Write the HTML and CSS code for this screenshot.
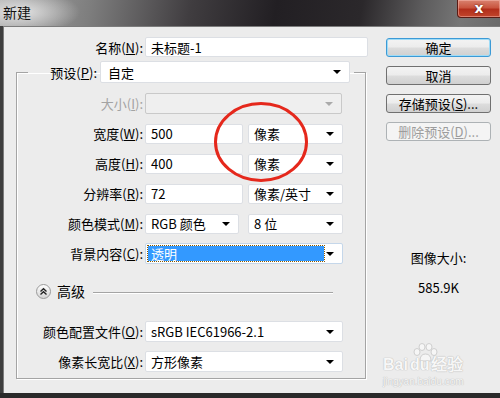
FILE: index.html
```html
<!DOCTYPE html>
<html lang="zh-CN">
<head>
  <meta charset="UTF-8" />
  <title>新建</title>
  <link rel="stylesheet" href="styles.css">
</head>
<body>
  <div class="window">
    <div class="titlebar">
      <span class="title">新建</span>
      <div class="close-btn">x</div>
    </div>

    <div class="client">
      <div class="form">
        <div class="row name-row">
          <label class="lbl">名称(<u>N</u>):</label>
          <div class="field input name-input">未标题-1</div>
        </div>

        <fieldset class="group">
          <legend class="preset">
            <label class="lbl preset-lbl">预设(<u>P</u>):</label>
            <div class="field select preset-select">自定<span class="arrow"></span></div>
          </legend>

          <div class="row first">
            <label class="lbl disabled">大小(<u>I</u>):</label>
            <div class="field select full off"><span class="arrow"></span></div>
          </div>
          <div class="row">
            <label class="lbl">宽度(<u>W</u>):</label>
            <div class="field input num">500</div>
            <div class="field select unit">像素<span class="arrow"></span></div>
          </div>
          <div class="row">
            <label class="lbl">高度(<u>H</u>):</label>
            <div class="field input num">400</div>
            <div class="field select unit">像素<span class="arrow"></span></div>
          </div>
          <div class="row">
            <label class="lbl">分辨率(<u>R</u>):</label>
            <div class="field input num">72</div>
            <div class="field select unit">像素/英寸<span class="arrow"></span></div>
          </div>
          <div class="row">
            <label class="lbl">颜色模式(<u>M</u>):</label>
            <div class="field select mode">RGB 颜色<span class="arrow"></span></div>
            <div class="field select unit">8 位<span class="arrow"></span></div>
          </div>
          <div class="row">
            <label class="lbl">背景内容(<u>C</u>):</label>
            <div class="field select full focused"><span class="sel-text">透明</span><span class="arrow"></span></div>
          </div>

          <div class="advanced">
            <svg class="adv-icon" width="15" height="15" viewBox="0 0 15 15">
              <defs>
                <linearGradient id="advg" x1="0" y1="0" x2="0" y2="1">
                  <stop offset="0" stop-color="#ffffff"/>
                  <stop offset="1" stop-color="#d4d4d4"/>
                </linearGradient>
              </defs>
              <circle cx="7.5" cy="7.5" r="7" fill="url(#advg)" stroke="#9a9a9a"/>
              <path d="M4.5 7.5 L7.5 4.8 L10.5 7.5 M4.5 10.5 L7.5 7.8 L10.5 10.5" fill="none" stroke="#222" stroke-width="1.4"/>
            </svg>
            <span class="adv-text">高级</span>
            <span class="adv-line"></span>
          </div>

          <div class="row profile">
            <label class="lbl">颜色配置文件(<u>O</u>):</label>
            <div class="field select full">sRGB IEC61966-2.1<span class="arrow"></span></div>
          </div>
          <div class="row">
            <label class="lbl">像素长宽比(<u>X</u>):</label>
            <div class="field select full">方形像素<span class="arrow"></span></div>
          </div>
        </fieldset>
      </div>

      <div class="side">
        <div class="btn default">确定</div>
        <div class="btn">取消</div>
        <div class="btn">存储预设(<u>S</u>)...</div>
        <div class="btn disabled">删除预设(<u>D</u>)...</div>
        <div class="image-size">
          <div>图像大小:</div>
          <div class="size-value">585.9K</div>
        </div>
      </div>
    </div>

    <svg class="mark" width="100" height="86" viewBox="0 0 100 86">
      <ellipse cx="50" cy="42" rx="45.5" ry="38.5" fill="none" stroke="#e5281c" stroke-width="3"/>
    </svg>

    <div class="watermark">
      <svg class="paw" width="30" height="20" viewBox="0 0 30 20">
        <g fill="#f6f6f6" stroke="#cfcfcf" stroke-width="1">
          <ellipse cx="6" cy="9" rx="3" ry="3.5"/>
          <ellipse cx="11" cy="4" rx="3" ry="3.5"/>
          <ellipse cx="18" cy="4" rx="3" ry="3.5"/>
          <ellipse cx="23" cy="9" rx="3" ry="3.5"/>
          <path d="M9 18 Q9 11 14.5 11 Q20 11 20 18 Z"/>
        </g>
      </svg>
      <div class="wm-line"><span>Bai</span><span class="du">du</span><span>经验</span></div>
      <div class="wm-url">jingyan.baidu.com</div>
    </div>
  </div>
</body>
</html>
```

FILE: styles.css
```css
* {
  box-sizing: border-box;
}
body {
  margin: 0;
  background: #2d2d2d;
  font-family: "Noto Sans CJK SC", "Microsoft YaHei", sans-serif;
  font-size: 13px;
  color: #000;
}
.window {
  width: 500px;
  height: 398px;
  position: relative;
  overflow: hidden;
  background: #3e3e3e;
  border-bottom: 5px solid #2a2a2a;
}
.titlebar {
  height: 26px;
  display: flex;
  align-items: flex-start;
  background:
    radial-gradient(ellipse 60px 22px at 20px 12px, rgba(235,235,235,0.9), rgba(235,235,235,0) 100%),
    linear-gradient(100deg, #a9a9a9 0%, #7e7e7e 18%, #403d40 38%, #221f23 55%, #2b282b 72%, #5d5c5d 84%, #777 92%, #6a6a6a 100%);
}
.title {
  padding-left: 3px;
  line-height: 25px;
  font-size: 14px;
  color: #111;
}
.close-btn {
  margin-left: auto;
  margin-right: -1px;
  width: 44px;
  height: 18px;
  border: 1px solid #5a1b14;
  border-top: none;
  border-radius: 0 0 0 4px;
  background: linear-gradient(#d9826f 0%, #c9553f 45%, #b22e1b 55%, #c2452c 100%);
  box-shadow: inset 0 0 0 1px rgba(255,200,190,0.45);
  color: #fff;
  font-family: "DejaVu Sans", sans-serif;
  font-weight: bold;
  font-size: 14px;
  line-height: 16px;
  text-align: center;
  text-shadow: 0 0 2px #4a0c06;
}
.client {
  margin-left: 3px;
  height: 367px;
  background: #ececec;
  border-top: 1px solid #7c7c7c;
  border-left: 1px solid #7c7c7c;
  display: flex;
}
.form {
  width: 370px;
  padding: 10px 0 0 12px;
}
.row {
  display: flex;
  align-items: center;
  height: 21px;
  margin-top: 9px;
}
.row.first {
  margin-top: 0;
}
.row.profile {
  margin-top: 20px;
}
.name-row {
  margin-top: 0;
  height: 20px;
}
.lbl {
  width: 126px;
  margin-right: 2px;
  text-align: right;
  white-space: nowrap;
}
.name-row .lbl {
  width: 127px;
}
.lbl.disabled {
  color: #a3a3a3;
}
.field {
  height: 100%;
  background: #fff;
  border: 1px solid #dcdfe4;
  border-radius: 2px;
  display: flex;
  align-items: center;
  padding-left: 5px;
  white-space: nowrap;
}
.name-input {
  width: 223px;
}
.select {
  padding-right: 8px;
}
.arrow {
  margin-left: auto;
  border-left: 4px solid transparent;
  border-right: 4px solid transparent;
  border-top: 4px solid #000;
}
.group {
  width: 350px;
  margin: 4px 0 0;
  padding: 10px 0 6px;
  min-width: 0;
  border: 1px solid #a4a4a4;
  box-shadow: inset 1px 1px 0 #fff, 1px 1px 0 #fff;
}
.preset {
  margin-left: 11px;
  padding: 0 4px 0 0;
  display: flex;
  align-items: center;
  height: 22px;
}
.preset-lbl {
  width: 69px;
  margin-right: 3px;
}
.preset-select {
  width: 250px;
  padding-left: 7px;
}
.full {
  width: 198px;
}
.off {
  width: 197px;
  background: #efefef;
  border-color: #c9c9c9;
}
.off .arrow {
  border-top-color: #aaa;
}
.num {
  width: 98px;
  height: 20px;
}
.unit {
  width: 95px;
  margin-left: 5px;
  height: 20px;
}
.mode {
  width: 94px;
  height: 20px;
  margin-right: 4px;
}
.focused {
  padding: 2px 8px 2px 2px;
  border-color: #c5d7ea;
}
.sel-text {
  width: 176px;
  height: 100%;
  background: #3399ff;
  color: #fff;
  padding-left: 3px;
  display: flex;
  align-items: center;
  outline: 1px dotted #8a5a00;
}
.advanced {
  display: flex;
  align-items: center;
  height: 20px;
  margin-top: 17px;
  padding-left: 19px;
}
.adv-text {
  margin-left: 6px;
  font-size: 14px;
}
.adv-line {
  flex: 1;
  margin: 3px 32px 0 8px;
  border-top: 1px solid #a4a4a4;
  border-bottom: 1px solid #fff;
}
.side {
  margin-left: 12px;
  padding-top: 11px;
  width: 105px;
}
.btn {
  height: 19px;
  margin-bottom: 9px;
  border: 1px solid #707070;
  border-radius: 3px;
  background: linear-gradient(#f3f3f3 0%, #ececec 48%, #dddddd 52%, #d0d0d0 100%);
  text-align: center;
  line-height: 17px;
  white-space: nowrap;
}
.btn.default {
  border-color: #3c9ad6;
  box-shadow: inset 0 0 0 1px #9fdcf7;
}
.btn.disabled {
  border-color: #adb2b5;
  background: #f4f4f4;
  color: #9c9c9c;
}
.image-size {
  margin-top: 108px;
  text-align: center;
  line-height: 18px;
}
.size-value {
  margin-top: 12px;
}
.mark {
  position: absolute;
  left: 211px;
  top: 100px;
}
.watermark {
  position: absolute;
  left: 383px;
  top: 343px;
  width: 92px;
  color: #f7f7f7;
  text-shadow: 0 0 1px #b9b9b9, 0 0 1px #b9b9b9;
}
.paw {
  display: block;
  margin-left: 28px;
}
.wm-line {
  display: flex;
  margin-top: -6px;
  font-family: "Liberation Sans", sans-serif;
  font-weight: bold;
  font-size: 16px;
  line-height: 16px;
}
.wm-line .du {
  margin-left: 2px;
  margin-right: 2px;
}
.wm-url {
  font-family: "Liberation Sans", sans-serif;
  font-size: 10px;
  line-height: 12px;
  margin-top: 3px;
}
```
